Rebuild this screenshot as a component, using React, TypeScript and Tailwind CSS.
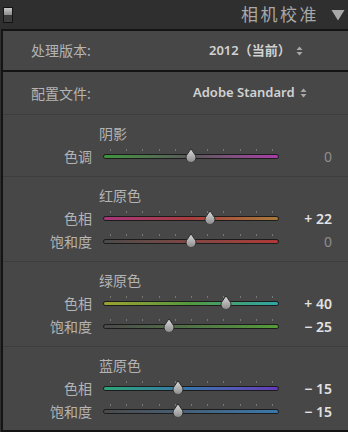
import React from "react";

interface SliderRow {
  label: string;
  value: number;
  track: string;
}

interface Section {
  title: string;
  rows: SliderRow[];
}

const sections: Section[] = [
  {
    title: "阴影",
    rows: [
      {
        label: "色调",
        value: 0,
        track: "bg-linear-to-r from-[#3c943c] via-[#585858] to-[#a83aa8]",
      },
    ],
  },
  {
    title: "红原色",
    rows: [
      {
        label: "色相",
        value: 22,
        track: "bg-linear-to-r from-[#a8357a] via-[#a83c3c] to-[#a87a3a]",
      },
      {
        label: "饱和度",
        value: 0,
        track: "bg-linear-to-r from-[#4a4a4a] to-[#b03838]",
      },
    ],
  },
  {
    title: "绿原色",
    rows: [
      {
        label: "色相",
        value: 40,
        track: "bg-linear-to-r from-[#9aa230] via-[#52983e] to-[#2ea6a6]",
      },
      {
        label: "饱和度",
        value: -25,
        track: "bg-linear-to-r from-[#4a4a4a] to-[#549c38]",
      },
    ],
  },
  {
    title: "蓝原色",
    rows: [
      {
        label: "色相",
        value: -15,
        track: "bg-linear-to-r from-[#2ea676] via-[#3872ac] to-[#6438bc]",
      },
      {
        label: "饱和度",
        value: -15,
        track: "bg-linear-to-r from-[#4a4a4a] to-[#3878ac]",
      },
    ],
  },
];

const ticks = Array.from({ length: 11 }, (_, i) => i);

function UpDown() {
  return (
    <svg width="7" height="10" viewBox="0 0 7 10" className="ml-[5px]">
      <path d="M3.5 0.5 L6.5 4 L0.5 4 Z" fill="#a8a8a8" />
      <path d="M0.5 6 L6.5 6 L3.5 9.5 Z" fill="#a8a8a8" />
    </svg>
  );
}

function Thumb() {
  return (
    <svg width="12" height="14" viewBox="0 0 12 14">
      <defs>
        <linearGradient id="thumbFill" x1="0" y1="0" x2="0" y2="1">
          <stop offset="0" stopColor="#dcdcdc" />
          <stop offset="1" stopColor="#8a8a8a" />
        </linearGradient>
      </defs>
      <path
        d="M6 0.8 L10.6 7.6 A5 5 0 1 1 1.4 7.6 Z"
        fill="url(#thumbFill)"
        stroke="#262626"
        strokeWidth="0.9"
      />
    </svg>
  );
}

function Slider({ value, track }: { value: number; track: string }) {
  const pos = 50 + value / 2;
  return (
    <div className="relative h-[23px] w-[176px]">
      {ticks.map((t) => (
        <div
          key={t}
          className="absolute top-[4px] h-[2px] w-px bg-[#767676]"
          style={{ left: 7 + t * 16.2 }}
        />
      ))}
      <div className="absolute top-[9px] h-[5px] w-full rounded-full border border-[#1c1c1c] bg-[#1c1c1c]">
        <div className={`h-full w-full rounded-full ${track}`} />
      </div>
      <div
        className="absolute top-[3px] -translate-x-1/2"
        style={{ left: `${pos}%` }}
      >
        <Thumb />
      </div>
    </div>
  );
}

function formatValue(v: number) {
  if (v > 0) return `+ ${v}`;
  if (v < 0) return `− ${Math.abs(v)}`;
  return "0";
}

export default function App() {
  return (
    <div className="h-[432px] w-[348px] overflow-hidden bg-[#2f2f2f] font-['Noto_Sans','Noto_Sans_CJK_SC',sans-serif]">
      {/* Header */}
      <div className="flex h-[29px] items-center pl-[3px] pr-[3px]">
        <div className="flex h-[16px] w-[10px] flex-col border border-[#151515]">
          <div className="h-1/2 bg-linear-to-b from-[#c8c8c8] to-[#8c8c8c]" />
          <div className="h-1/2 bg-[#3c3c3c]" />
        </div>
        <div className="flex-1" />
        <span className="text-[17px] leading-none tracking-[2.5px] text-[#a8a8a8]">
          相机校准
        </span>
        <svg width="14" height="12" viewBox="0 0 14 12" className="ml-[12px]">
          <path d="M0.5 1 L13.5 1 L7 11.5 Z" fill="#a8a8a8" />
        </svg>
      </div>

      {/* Panel */}
      <div className="ml-px w-[360px] border-t-2 border-b-2 border-l-2 border-[#141414] bg-[#474747]">
        <div className="flex h-[41px] items-center border-b-2 border-[#141414] pl-[28px] text-[14px] text-[#b4b4b4]">
          <span className="w-[176px]">处理版本:</span>
          <span className="ml-[2px] text-[13px] font-semibold text-[#d2d2d2]">
            2012（当前）
          </span>
          <UpDown />
        </div>
        <div className="flex h-[43px] items-center border-b border-[#3d3d3d] pl-[28px] text-[14px] text-[#b4b4b4]">
          <span className="w-[162px]">配置文件:</span>
          <span className="text-[13px] font-semibold text-[#d2d2d2]">
            Adobe Standard
          </span>
          <UpDown />
        </div>

        {sections.map((section, si) => (
          <div
            key={section.title}
            className={`pt-[7px] ${
              si < sections.length - 1
                ? "border-b border-[#3d3d3d] pb-[8px]"
                : "pb-[7px]"
            }`}
          >
            <div className="flex h-[23px] items-center pl-[96px] text-[14px] text-[#b4b4b4]">
              {section.title}
            </div>
            {section.rows.map((row) => (
              <div key={row.label} className="flex h-[23px] items-center">
                <span className="w-[89px] text-right text-[14px] text-[#b4b4b4]">
                  {row.label}
                </span>
                <div className="ml-[11px]">
                  <Slider value={row.value} track={row.track} />
                </div>
                <span
                  className={`w-[53px] text-right text-[14px] ${
                    row.value === 0
                      ? "text-[#8e8e8e]"
                      : "font-semibold text-[#e2e2e2]"
                  }`}
                >
                  {formatValue(row.value)}
                </span>
              </div>
            ))}
          </div>
        ))}
      </div>
    </div>
  );
}
